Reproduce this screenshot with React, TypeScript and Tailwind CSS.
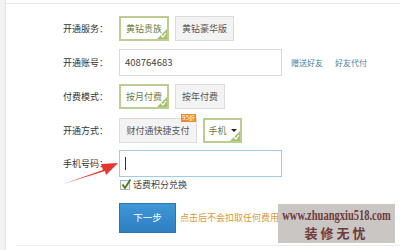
import React from "react";

const cjk = { fontFamily: '"Noto Sans CJK SC", "Noto Sans", sans-serif' };

function Corner() {
  return (
    <span className="absolute bottom-0 right-0 w-0 h-0 border-l-[10px] border-l-transparent border-b-[10px] border-b-[#a9c06a]">
      <svg className="absolute left-[-7px] top-[2px]" width="7" height="7" viewBox="0 0 7 7">
        <path d="M1 4 L3 6 L6 2" stroke="#fff" strokeWidth="1.2" fill="none" />
      </svg>
    </span>
  );
}

function Opt({ label, active, w, children }: { label: string; active?: boolean; w: string; children?: React.ReactNode }) {
  return (
    <div
      className={`relative h-[25px] ${w} shrink-0 whitespace-nowrap flex items-center justify-center text-[9px] ${
        active ? "border-2 border-[#bccd93] bg-white text-[#6d7a45]" : "border border-[#dcdcdc] bg-[#f3f3f3] text-[#555]"
      }`}
    >
      {label}
      {children}
      {active && <Corner />}
    </div>
  );
}

function Row({ label, children, className = "" }: { label: string; children: React.ReactNode; className?: string }) {
  return (
    <div className={`flex items-center ${className}`}>
      <div className="w-[109px] text-right text-[9px] text-[#333] whitespace-nowrap">{label}</div>
      <div className="ml-[11px] flex items-center gap-[6px]">{children}</div>
    </div>
  );
}

export default function App() {
  return (
    <div className="relative w-[400px] h-[250px] bg-white overflow-hidden flex" style={cjk}>
      <div className="w-[6px] h-full bg-[#f3f3f3] border-r border-[#e4e4e4]" />
      <div className="flex-1 flex flex-col">
        <div className="mt-[3px] h-px bg-[#e8e8e8]" />
        <div className="flex flex-col pt-[12px] ml-[-7px]">
          <Row label="开通服务：">
            <Opt label="黄钻贵族" active w="w-[50px]" />
            <Opt label="黄钻豪华版" w="w-[59px]" />
          </Row>
          <Row label="开通账号：" className="mt-[8px]">
            <div className="h-[27px] w-[163px] border border-[#dadada] flex items-center pl-[5px] text-[9.5px] text-[#444]">
              408764683
            </div>
            <span className="ml-[3px] text-[8px] text-[#4d7fa0]">赠送好友</span>
            <span className="ml-[6px] text-[8px] text-[#4d7fa0]">好友代付</span>
          </Row>
          <Row label="付费模式：" className="mt-[8px]">
            <Opt label="按月付费" active w="w-[50px]" />
            <Opt label="按年付费" w="w-[50px]" />
          </Row>
          <Row label="开通方式：" className="mt-[9px]">
            <Opt label="财付通快捷支付" w="w-[78px]">
              <span className="absolute top-[-5px] right-[0px] bg-[#f08a24] text-white text-[6px] leading-[8px] px-[1px]">95折</span>
            </Opt>
            <Opt label="" active w="w-[39px]">
              <span className="flex items-center gap-[4px]">
                手机
                <span className="w-0 h-0 border-l-[3px] border-r-[3px] border-t-[3px] border-l-transparent border-r-transparent border-t-[#222]" />
              </span>
            </Opt>
          </Row>
          <Row label="手机号码：" className="mt-[7px]">
            <div className="h-[27px] w-[163px] border border-[#9fcbe6] flex items-center pl-[5px]">
              <span className="w-px h-[13px] bg-[#333]" />
            </div>
          </Row>
          <div className="ml-[121px] mt-[1px] flex items-center gap-[3px] text-[9px] text-[#444]">
            <span className="relative w-[10px] h-[10px] border border-[#b5b5b5] bg-[#f4f4f4]">
              <svg className="absolute left-[0px] top-[-3px]" width="11" height="12" viewBox="0 0 11 12">
                <path d="M1.5 6.5 L4 10 L9.5 1.5" stroke="#4c7a1c" strokeWidth="1.8" fill="none" />
              </svg>
            </span>
            话费积分兑换
          </div>
          <div className="ml-[120px] mt-[11px] flex items-center gap-[4px]">
            <div className="w-[57px] h-[30px] bg-gradient-to-b from-[#3f97d6] to-[#2d7fc2] border border-[#2b74b0] text-white text-[9.5px] flex items-center justify-center">
              下一步
            </div>
            <span className="text-[9px] text-[#d89a3a] whitespace-nowrap">点击后不会扣取任何费用</span>
          </div>
        </div>
        <div className="mt-auto mb-[4px] ml-[10px] h-px bg-[#ececec]" />
      </div>

      <svg className="absolute left-0 top-0" width="400" height="250" viewBox="0 0 400 250">
        <path d="M63 184 L103 170 L101 164 L118 163 L106 175 L105 171 Z" fill="#e2372e" />
      </svg>

      <div className="absolute left-[278px] top-[204px] w-[117px] h-[39px] bg-[#c9c6c4] flex flex-col items-center justify-center leading-none">
        <span className="text-[15px] font-bold text-[#6e3b3b] scale-x-[0.7] whitespace-nowrap" style={{ fontFamily: '"Liberation Serif", serif' }}>
          www.zhuangxiu518.com
        </span>
        <span className="mt-[3px] text-[13px] font-semibold text-[#6e3b3b] tracking-[3px]" style={{ fontFamily: '"Noto Sans CJK SC", serif' }}>
          装修无忧
        </span>
      </div>
    </div>
  );
}
